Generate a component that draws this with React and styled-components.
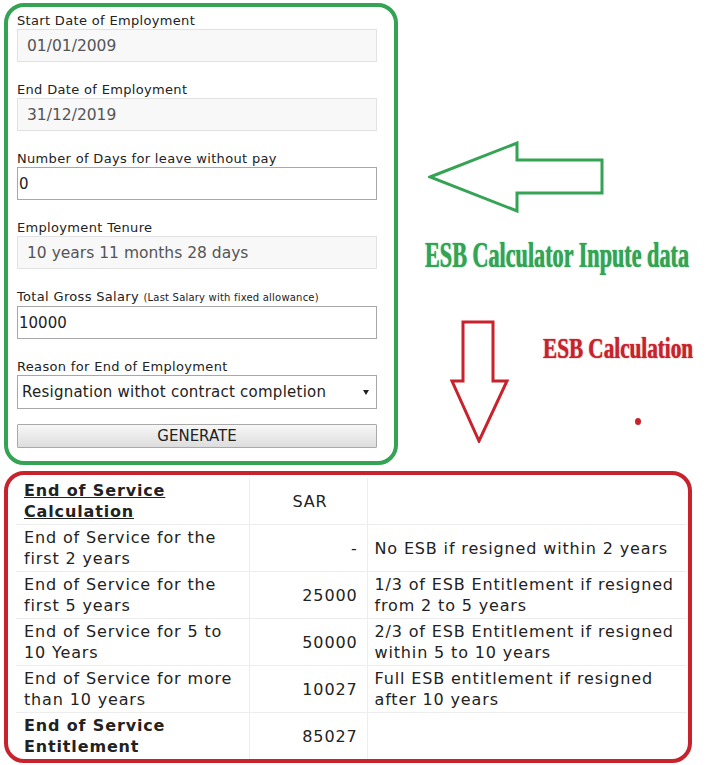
import React from "react";
import styled, { createGlobalStyle } from "styled-components";

// ----- Global -----
const GlobalStyle = createGlobalStyle`
  html, body {
    margin: 0;
    padding: 0;
    background: #fff;
    overflow: hidden;
  }
  body {
    font-family: "DejaVu Sans", Verdana, sans-serif;
    color: #222;
  }
`;

const GREEN = "#34a353";
const RED = "#c8232c";

// --- Page layout ---
const Page = styled.div`
  display: flex;
  flex-direction: column;
  padding: 3px 0 0 4px;
`;

const TopRow = styled.div`
  display: flex;
  align-items: flex-start;
`;

// --- Form panel ---
const FormPanel = styled.div`
  width: 394px;
  box-sizing: border-box;
  border: 4px solid ${GREEN};
  border-radius: 20px;
  padding: 5px 17px 13px 9px;
  display: flex;
  flex-direction: column;
`;

const Field = styled.div`
  display: flex;
  flex-direction: column;
  margin-bottom: ${p => (p.last ? "15px" : "19px")};
`;

const Label = styled.label`
  font-size: 13px;
  line-height: 17px;
  letter-spacing: 0.33px;
  color: #222;
  white-space: nowrap;
`;

const Note = styled.span`
  font-size: 10px;
  letter-spacing: 0.2px;
`;

const TextInput = styled.input`
  box-sizing: border-box;
  width: 360px;
  height: 33px;
  margin: 0;
  font-family: "DejaVu Sans", Verdana, sans-serif;
  font-size: ${p => (p.muted ? "15.5px" : "15px")};
  color: ${p => (p.muted ? "#555" : "#222")};
  background: ${p => (p.muted ? "#f8f8f8" : "#fff")};
  border: 1px solid ${p => (p.muted ? "#e2e2e2" : "#a8a8a8")};
  border-radius: 0;
  padding: 0 0 0 ${p => (p.muted ? "9px" : "1px")};
  outline: none;
`;

const SelectBox = styled.div`
  box-sizing: border-box;
  width: 360px;
  height: 34px;
  display: flex;
  align-items: center;
  justify-content: space-between;
  border: 1px solid #a8a8a8;
  background: #fff;
  padding: 0 7px 0 4px;
  font-size: 15px;
  letter-spacing: 0.24px;
  color: #222;
  white-space: nowrap;
`;

const GenerateButton = styled.button`
  box-sizing: border-box;
  width: 360px;
  height: 24px;
  margin: 0;
  padding: 0;
  font-family: "DejaVu Sans", Verdana, sans-serif;
  font-size: 15px;
  color: #222;
  border: 1px solid #a9a9a9;
  border-radius: 1px;
  background: linear-gradient(#f7f7f7, #dddddd);
  cursor: pointer;
`;

// --- Annotations ---
const Annotations = styled.div`
  flex: 1;
  display: flex;
  flex-direction: column;
  align-items: flex-start;
`;

const LeftArrow = styled.svg`
  margin: 138px 0 0 30px;
`;

// tall, narrow poster lettering: stretched up from the baseline
const Caption = styled.div`
  font-family: "Liberation Serif", "Times New Roman", serif;
  font-weight: bold;
  font-size: ${p => p.size}px;
  line-height: ${p => p.size}px;
  color: ${p => p.color};
  white-space: nowrap;
  transform: scaleY(${p => p.stretch});
  transform-origin: 0 ${p => p.baseline}px;
  text-shadow: 0 0 1px ${p => p.color};
`;

const GreenCaption = styled(Caption)`
  margin: 36px 0 0 27px;
`;

const DownRow = styled.div`
  display: flex;
  align-items: flex-start;
  margin: 49px 0 0 52px;
`;

const RedColumn = styled.div`
  display: flex;
  flex-direction: column;
  margin: 21px 0 0 34px;
`;

const Dot = styled.span`
  width: 6px;
  height: 7px;
  border-radius: 50%;
  background: ${RED};
  margin: 56px 0 0 92px;
`;

// --- Results panel ---
const ResultPanel = styled.div`
  width: 688px;
  box-sizing: border-box;
  margin-top: 6px;
  border: 4px solid ${RED};
  border-radius: 20px;
  padding: 3px 0 0 8px;
`;

const Table = styled.table`
  width: 671px;
  border-collapse: collapse;
  table-layout: fixed;
  font-size: 16px;
  line-height: 21px;
  letter-spacing: 0.85px;
  color: #222;
`;

const Cell = styled.td`
  height: 46px;
  box-sizing: border-box;
  border: 1px solid #ededed;
  padding: 2px ${p => (p.align === "right" ? "9px" : "4px")} 2px ${p => (p.pad || 8)}px;
  text-align: ${p => p.align || "left"};
  vertical-align: middle;
  font-weight: ${p => (p.bold ? "bold" : "normal")};
  text-decoration: ${p => (p.underline ? "underline" : "none")};
  &:first-child { border-left: none; }
  &:last-child { border-right: none; }
`;

const Row = styled.tr`
  &:first-child td { border-top: none; }
  &:last-child td { border-bottom: none; }
`;

const rows = [
  { label: "End of Service for the first 2 years", sar: "-", note: "No ESB if resigned within 2 years" },
  { label: "End of Service for the first 5 years", sar: "25000", note: "1/3 of ESB Entitlement if resigned from 2 to 5 years" },
  { label: "End of Service for 5 to 10 Years", sar: "50000", note: "2/3 of ESB Entitlement if resigned within 5 to 10 years" },
  { label: "End of Service for more than 10 years", sar: "10027", note: "Full ESB entitlement if resigned after 10 years" },
];

function App() {
  return (
    <Page>
      <GlobalStyle />
      <TopRow>
        <FormPanel>
          <Field>
            <Label>Start Date of Employment</Label>
            <TextInput muted readOnly value="01/01/2009" />
          </Field>
          <Field>
            <Label>End Date of Employment</Label>
            <TextInput muted readOnly value="31/12/2019" />
          </Field>
          <Field>
            <Label>Number of Days for leave without pay</Label>
            <TextInput readOnly value="0" />
          </Field>
          <Field>
            <Label>Employment Tenure</Label>
            <TextInput muted readOnly value="10 years 11 months 28 days" />
          </Field>
          <Field>
            <Label>
              Total Gross Salary <Note>(Last Salary with fixed allowance)</Note>
            </Label>
            <TextInput readOnly value="10000" />
          </Field>
          <Field last>
            <Label>Reason for End of Employment</Label>
            <SelectBox>
              <span>Resignation withot contract completion</span>
              <svg width="6" height="5" viewBox="0 0 6 5">
                <path d="M0 0 L6 0 L3 5 Z" fill="#222" />
              </svg>
            </SelectBox>
          </Field>
          <GenerateButton>GENERATE</GenerateButton>
        </FormPanel>

        <Annotations>
          <LeftArrow width="176" height="72" viewBox="0 0 176 72">
            <polygon
              points="2,36 89,2 89,19 174,19 174,52 89,52 89,70"
              fill="none"
              stroke={GREEN}
              strokeWidth="3"
            />
          </LeftArrow>
          <GreenCaption size={22.2} stretch={1.57} baseline={18.6} color={GREEN}>
            ESB Calculator Inpute data
          </GreenCaption>
          <DownRow>
            <svg width="59" height="123" viewBox="0 0 59 123">
              <polygon
                points="13,2 43,2 43,61 57,61 29,121 2,61 13,61"
                fill="none"
                stroke={RED}
                strokeWidth="3"
              />
            </svg>
            <RedColumn>
              <Caption size={21.2} stretch={1.39} baseline={17.7} color={RED}>
                ESB Calculation
              </Caption>
              <Dot />
            </RedColumn>
          </DownRow>
        </Annotations>
      </TopRow>

      <ResultPanel>
        <Table>
          <colgroup>
            <col style={{ width: 233 }} />
            <col style={{ width: 118 }} />
            <col style={{ width: 320 }} />
          </colgroup>
          <tbody>
            <Row>
              <Cell bold underline>End of Service Calculation</Cell>
              <Cell align="center">SAR</Cell>
              <Cell />
            </Row>
            {rows.map(r => (
              <Row key={r.label}>
                <Cell>{r.label}</Cell>
                <Cell align="right">{r.sar}</Cell>
                <Cell pad={7}>{r.note}</Cell>
              </Row>
            ))}
            <Row>
              <Cell bold>End of Service Entitlement</Cell>
              <Cell align="right">85027</Cell>
              <Cell />
            </Row>
          </tbody>
        </Table>
      </ResultPanel>
    </Page>
  );
}

export default App;
